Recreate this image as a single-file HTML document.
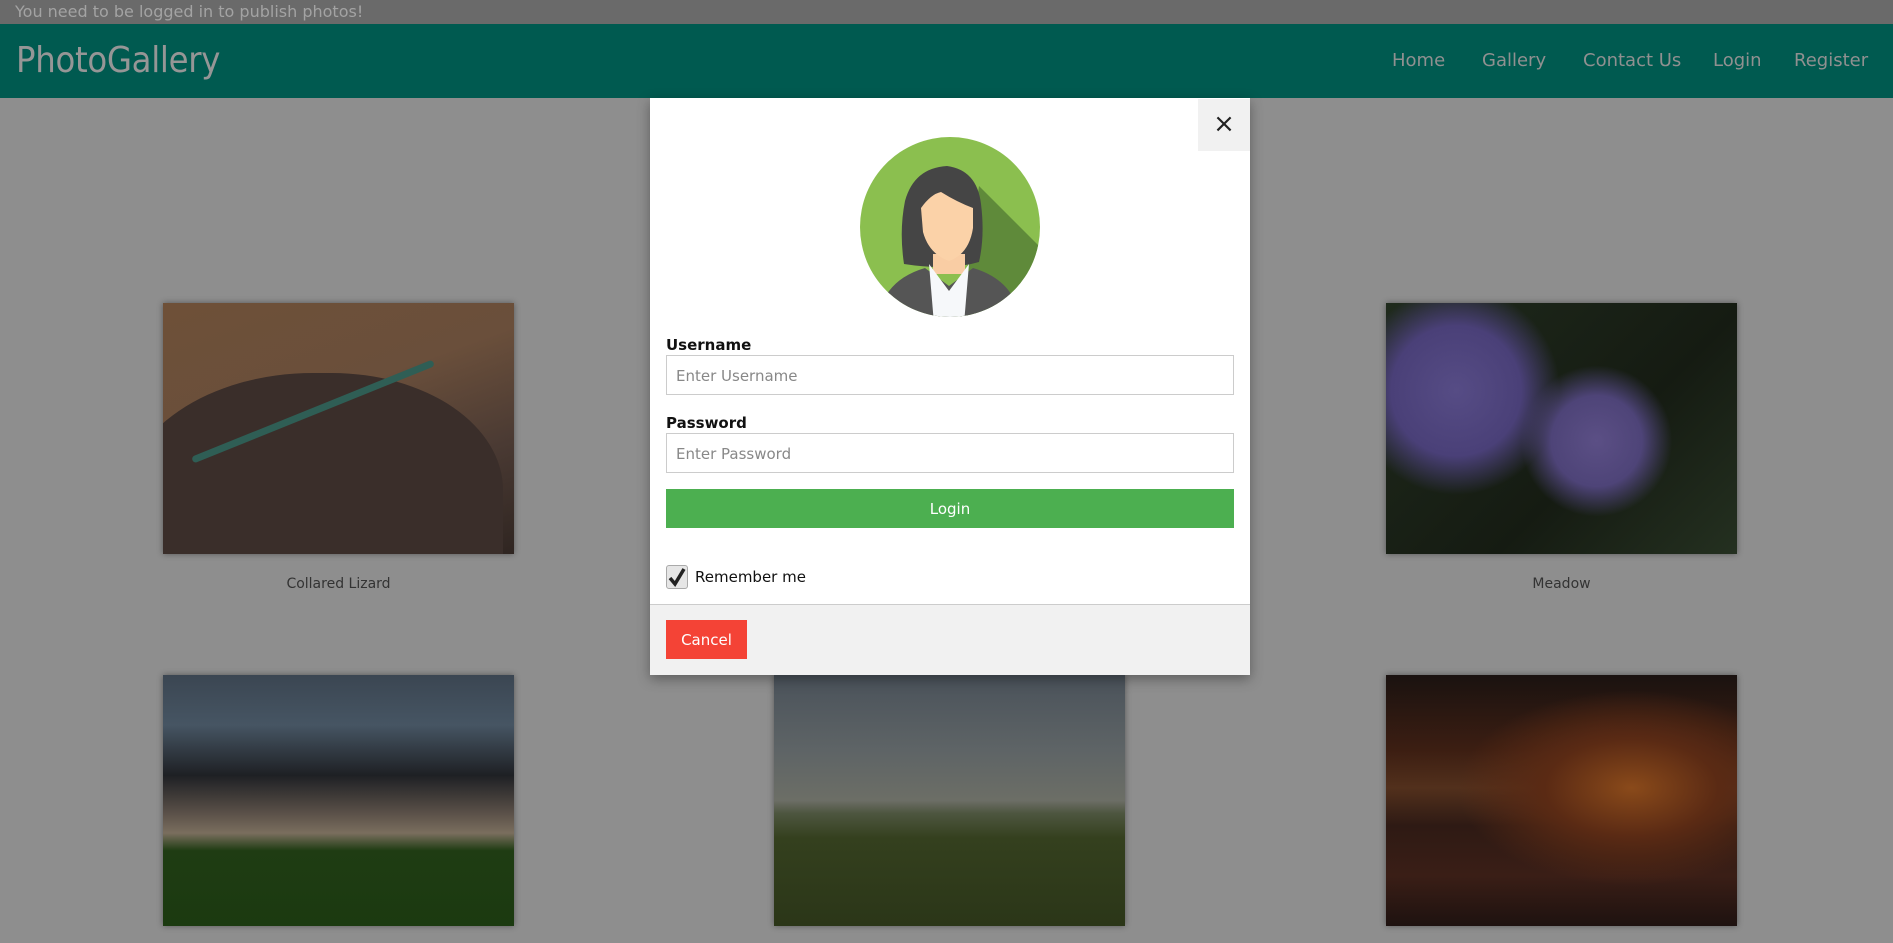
<!DOCTYPE html>
<html><head><meta charset="utf-8"><style>
*{margin:0;padding:0;box-sizing:border-box}
body{width:1893px;height:943px;overflow:hidden;background:#8e8e8e;font-family:"DejaVu Sans","Liberation Sans",sans-serif;position:relative}
.top{position:absolute;left:0;top:0;width:1893px;height:24px;background:#6a6a6a;color:#a3a3a3;font-size:16px;line-height:24px;padding-left:15px}
.nav{position:absolute;left:0;top:24px;width:1893px;height:74px;background:#005a50}
.brand{position:absolute;left:16px;top:16px;font-size:36px;color:#969696;font-family:"DejaVu Sans Condensed","DejaVu Sans",sans-serif;letter-spacing:-0.3px}
.nav a{position:absolute;top:26px;font-size:18px;color:#909090;text-decoration:none}
.img{position:absolute;width:351px;height:251px;box-shadow:0 0 6px rgba(0,0,0,.4);overflow:hidden}
.cap{position:absolute;width:351px;text-align:center;font-size:14px;color:#333;top:576px}
.modal{position:absolute;left:650px;top:98px;width:600px;height:577px;background:#fff;box-shadow:0 4px 12px rgba(0,0,0,.35)}
.close{position:absolute;right:0;top:1px;width:52px;height:52px;background:#f1f1f1;font-size:26px;text-align:center;line-height:50px;color:#222}
label{position:absolute;left:16px;font-weight:bold;font-size:15px;color:#111}
.inp{position:absolute;left:16px;width:568px;height:40px;border:1px solid #ccc;font-size:15px;color:#888;padding-left:9px;line-height:40px}
.btn{position:absolute;left:16px;top:391px;width:568px;height:39px;background:#4caf50;color:#fff;text-align:center;line-height:40px;font-size:15px}
.chk{position:absolute;left:16px;top:467px;width:22px;height:24px;border:1px solid #aaa;border-radius:3px;background:#e6e6e6}
.rem{position:absolute;left:45px;top:470px;font-size:15px;color:#111}
.foot{position:absolute;left:0;top:506px;width:600px;height:71px;background:#f1f1f1;border-top:1px solid #ccc}
.cancel{position:absolute;left:16px;top:15px;width:81px;height:39px;background:#f44336;color:#fff;font-size:15px;line-height:40px;text-align:center}
</style></head><body>
<div class="top">You need to be logged in to publish photos!</div>
<div class="nav"><div class="brand">PhotoGallery</div>
<a style="left:1392px">Home</a><a style="left:1482px">Gallery</a><a style="left:1583px">Contact Us</a><a style="left:1713px">Login</a><a style="left:1794px">Register</a></div>

<div class="img" style="left:163px;top:303px;background:linear-gradient(160deg,#6e5038 0%,#6a4f3b 40%,#4a3a33 70%,#2f2521 100%)">
<div style="position:absolute;left:-40px;top:70px;width:380px;height:260px;background:#3a2e2a;border-radius:50% 45% 0 0"></div>
<div style="position:absolute;left:20px;top:105px;width:260px;height:7px;background:#2f5e55;transform:rotate(-22deg);border-radius:4px"></div></div>
<div class="cap" style="left:163px">Collared Lizard</div>
<div class="img" style="left:1386px;top:303px;background:radial-gradient(circle at 60% 55%,#5b4f85 0,#4e4478 18%,transparent 30%),radial-gradient(circle at 20% 35%,#564c85 0,#4a4078 20%,transparent 32%),linear-gradient(135deg,#1f2a1c,#151b12 60%,#243020)"></div>
<div class="cap" style="left:1386px">Meadow</div>
<div class="img" style="left:163px;top:675px;background:linear-gradient(180deg,#3b4652 0%,#465563 20%,#1e2024 40%,#5a5048 55%,#7a6e5e 63%,#1f3c13 70%,#1b3a10 100%)"></div>
<div class="img" style="left:774px;top:675px;background:linear-gradient(180deg,#4a525a 0%,#5e6466 30%,#6c6e66 50%,#4e5640 55%,#34401e 65%,#2b3618 100%)"></div>
<div class="img" style="left:1386px;top:675px;background:radial-gradient(ellipse at 70% 45%,#8a4a1a 0,#5a2a14 25%,transparent 50%),linear-gradient(180deg,#1a1210 0%,#3c1e12 30%,#52301c 45%,#2e1a14 60%,#3a1e16 80%,#1e1210 100%)"></div>

<div class="modal">
<div class="close">×</div>
<svg style="position:absolute;left:209px;top:38px" width="182" height="182" viewBox="0 0 182 182">
<defs><clipPath id="c"><circle cx="91" cy="91" r="90"/></clipPath></defs>
<g clip-path="url(#c)">
<rect width="182" height="182" fill="#8bbf4f"/>
<polygon points="120,50 190,120 190,190 100,190" fill="#5f8a3a"/>
<path d="M45 128 Q40 95 46 65 Q55 32 88 30 Q118 34 122 68 Q126 100 120 126 Q90 135 45 128 Z" fill="#454545"/>
<path d="M74 138 L74 118 L106 118 L106 138 Z" fill="#f9cda4"/>
<path d="M62 72 Q72 58 82 56 Q98 66 114 72 L114 92 Q110 118 90 125 Q70 118 64 96 Z" fill="#fbd2a8"/>
<path d="M22 170 Q32 142 66 132 L90 150 L114 132 Q148 142 158 170 L160 200 L20 200 Z" fill="#555"/>
<path d="M70 128 L90 155 L110 128 L104 200 L76 200 Z" fill="#f6f8fa"/>
</g></svg>
<label style="top:238px">Username</label>
<div class="inp" style="top:257px">Enter Username</div>
<label style="top:316px">Password</label>
<div class="inp" style="top:335px">Enter Password</div>
<div class="btn">Login</div>
<div class="chk"><svg width="20" height="22" viewBox="0 0 20 22"><path d="M3 12 L8 18 L17 3" stroke="#222" stroke-width="3.5" fill="none"/></svg></div>
<div class="rem">Remember me</div>
<div class="foot"><div class="cancel">Cancel</div></div>
</div>
</body></html>
